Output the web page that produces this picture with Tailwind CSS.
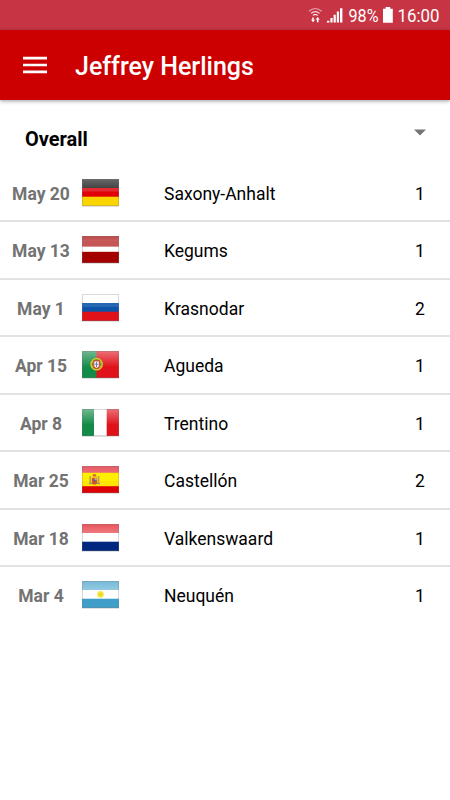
<!DOCTYPE html>
<html lang="en">
<head>
  <meta charset="UTF-8" />
  <meta name="viewport" content="width=device-width, initial-scale=1" />
  <title>Jeffrey Herlings</title>
  <script src="https://cdn.jsdelivr.net/npm/@tailwindcss/browser@4"></script>
</head>
<body class="bg-white text-black font-[Roboto,sans-serif] h-[800px] overflow-hidden">

  <!-- Status bar -->
  <div class="h-[30px] bg-[#c73545]">
    <svg width="450" height="30" viewBox="0 0 450 30" fill="white">
      <g fill="none" stroke="white" stroke-width="1.2">
        <path d="M309 11.2Q315.2 5.8 321.6 11.2" opacity=".55" />
        <path d="M311 13.4Q315.2 9.8 319.6 13.4" opacity=".8" />
        <path d="M313 15.4Q315.2 13.6 317.6 15.4" />
      </g>
      <path d="M312.2 17.4h1.6v2.4h1.2l-2 2.4-2-2.4h1.2zM316.9 22.2h1.6v-2.6h1.3l-2.1-2.5-2.1 2.5h1.3z" />
      <path d="M327.2 20.8h2.2v1.7h-2.8zM330.4 18h2.2v4.5h-2.2zM333.6 14.8h2.2v7.7h-2.2zM336.8 11.6h2.2v10.9h-2.2zM340 8.2h2.4v14.3H340z" />
      <text x="348.5" y="22" font-size="18" textLength="30" lengthAdjust="spacingAndGlyphs">98%</text>
      <path d="M385.6 7h4.6v1.8h2.6v14h-9.8v-14h2.6z" />
      <text x="397.5" y="22" font-size="18.5" textLength="42" lengthAdjust="spacingAndGlyphs">16:00</text>
    </svg>
  </div>

  <!-- App bar -->
  <header class="h-[70px] bg-[#cc0000] flex items-center pl-[23px] shadow-[0_1px_4px_rgba(0,0,0,0.4)]">
    <svg width="24" height="18" viewBox="0 0 24 18" fill="white">
      <path d="M0 .8h24v2.6H0zM0 7.7h24v2.6H0zM0 14.6h24v2.6H0z" />
    </svg>
    <h1 class="ml-7 mt-[2px] text-[25px] leading-none font-medium text-white whitespace-nowrap">Jeffrey Herlings</h1>
  </header>

  <!-- Category picker -->
  <div class="h-[64.5px] flex items-start justify-between pl-[25px] pr-6">
    <span class="mt-7 text-[20px] leading-[22px] font-bold">Overall</span>
    <svg class="mt-[29px]" width="12" height="7" viewBox="0 0 12 7"><path d="M0 .5h12L6 6.5z" fill="#757575" /></svg>
  </div>

  <ul id="results"></ul>

  <svg class="absolute w-0 h-0">
    <defs>
      <linearGradient id="gloss" x1="0" y1="0" x2="0" y2="1">
        <stop offset="0" stop-color="#fff" stop-opacity=".28" />
        <stop offset="1" stop-color="#fff" stop-opacity=".44" />
      </linearGradient>
      <linearGradient id="shine" x1="0" y1="0" x2="0" y2="1">
        <stop offset="0" stop-color="#fff" stop-opacity=".4" />
        <stop offset=".6" stop-color="#fff" stop-opacity="0" />
      </linearGradient>
      <linearGradient id="charcoal" x1="0" y1="0" x2="0" y2="1">
        <stop offset="0" stop-color="#686868" />
        <stop offset="1" stop-color="#444" />
      </linearGradient>
    </defs>
  </svg>

  <script>
    // three equal bands, top one glossy
    const bands = (a, b, c) => `
      <rect width="37" height="9" fill="${a}" />
      <rect width="37" height="9" fill="url(#gloss)" />
      <rect y="9" width="37" height="9" fill="${b}" />
      <rect y="17.7" width="37" height="9.3" fill="${c}" />`;

    const flags = {
      de: bands('#171717', '#df0008', '#fbd500') +
        '<rect width="37" height="9" fill="url(#charcoal)" /><rect y="9" width="37" height="3.5" fill="#e32a31" />',
      lv: bands('#a60000', '#fff', '#a50000') +
        '<rect y="5" width="37" height="5.8" fill="#c65555" /><rect y="10.8" width="37" height="5" fill="#fff" /><rect y="15.8" width="37" height="11.2" fill="#a50000" />',
      ru: bands('#fff', '#0c54a8', '#df1119') + '<rect y="9" width="37" height="4" fill="#2667b3" />',
      pt: `<rect width="15" height="27" fill="#128a48" /><rect x="14.5" width="22.5" height="27" fill="#e0121b" />
        <rect width="37" height="27" fill="url(#shine)" />
        <circle cx="14.6" cy="13.2" r="5.6" fill="#6e8f24" stroke="#d5c62b" stroke-width="1.5" />
        <path d="M9.5 10.5l10 5.5M19.5 10.5l-10 5.5" stroke="#d8c42c" />
        <path d="M11.8 10h5.6v4.4a2.8 2.8 0 0 1-5.6 0z" fill="#fff" stroke="#dc4140" stroke-width="1.1" />
        <path d="M14.6 11v5M12.8 13.2h3.6" stroke="#5878ac" stroke-width="1" />`,
      it: `<rect width="37" height="27" fill="#fff" /><rect width="12" height="27" fill="#128a48" /><rect x="24.7" width="12.3" height="27" fill="#df1119" />
        <rect width="37" height="27" fill="url(#shine)" />`,
      es: `<rect width="37" height="27" fill="#fff000" />
        <rect width="37" height="6.7" fill="#e23743" /><rect width="37" height="6.7" fill="url(#gloss)" opacity=".6" />
        <rect y="15" width="37" height="5.3" fill="#ffe500" /><rect y="20.2" width="37" height="6.8" fill="#dd0005" />
        <path d="M8.2 10v8M16.6 10v8" stroke="#bd9c65" stroke-width="1.6" /><path d="M7 17.6h3M15 17.6h3" stroke="#8d8c8c" />
        <path d="M9.8 11.8h5.4v4.2a2.7 2.7 0 0 1-5.4 0z" fill="#cf5330" />
        <path d="M10.4 10.6l.6-2 1.5-.7 1.5.7.6 2z" fill="#d4623a" />
        <path d="M12.6 12.2h2.2v2h-2.2z" fill="#c8a9b1" /><circle cx="12.5" cy="14.5" r=".9" fill="#41629e" />`,
      nl: bands('#df1119', '#fff', '#002780'),
      ar: bands('#409fc9', '#fff', '#409fc9') + '<circle cx="18.5" cy="13.4" r="3.3" fill="#f6e64b" /><circle cx="18.5" cy="13.4" r="2" fill="#eddb20" />',
    };

    const races = [
      ['May 20', 'de', 'Saxony-Anhalt', 1],
      ['May 13', 'lv', 'Kegums', 1],
      ['May 1', 'ru', 'Krasnodar', 2],
      ['Apr 15', 'pt', 'Agueda', 1],
      ['Apr 8', 'it', 'Trentino', 1],
      ['Mar 25', 'es', 'Castellón', 2],
      ['Mar 18', 'nl', 'Valkenswaard', 1],
      ['Mar 4', 'ar', 'Neuquén', 1],
    ];

    document.getElementById('results').innerHTML = races.map(([date, flag, place, rank]) => `
      <li class="h-[57.5px] flex items-center border-b-2 border-[#e2e2e2] last:border-transparent text-[17.5px] leading-[18px]">
        <span class="w-[82px] text-center font-bold text-[#737373] mt-[3px]">${date}</span>
        <svg class="shrink-0 overflow-visible" width="37" height="27" viewBox="0 0 37 27">
          <path d="M0 27.3h37" stroke="#000" stroke-opacity=".15" />
          ${flags[flag]}
          <rect x=".5" y=".5" width="36" height="26" fill="none" stroke="#777" stroke-opacity=".28" />
        </svg>
        <span class="ml-[45px] flex-1 mt-[3px]">${place}</span>
        <span class="w-[60px] text-center mt-[3px]">${rank}</span>
      </li>
    `).join('');
  </script>

</body>
</html>
